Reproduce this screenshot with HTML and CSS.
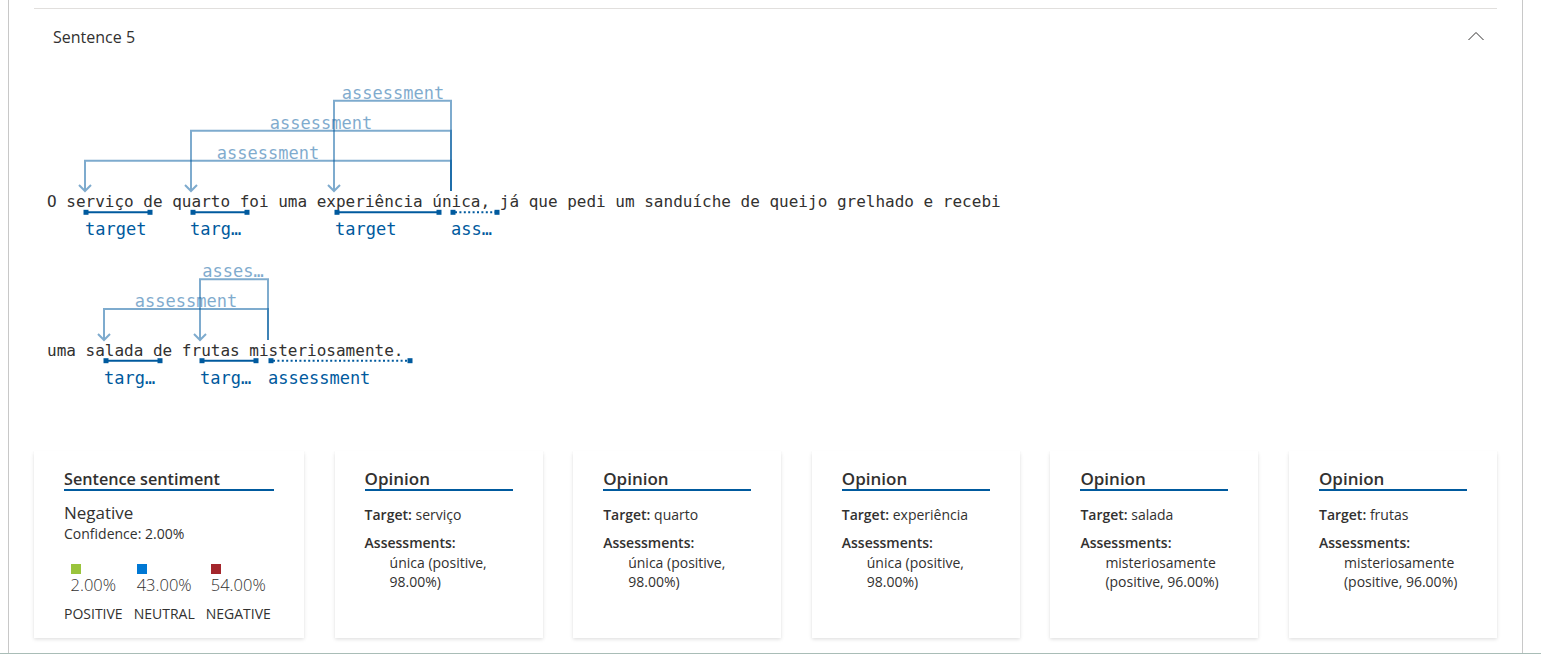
FILE: index.html
```html
<!DOCTYPE html>
<html lang="pt">
<head>
<meta charset="utf-8">
<title>Sentence 5</title>
<link rel="stylesheet" href="styles.css">
</head>
<body>
<div class="frame">
  <div class="panel">
    <section class="sentence">
      <header class="sentence-head">
        <span class="sentence-title">Sentence 5</span>
        <svg class="chevron" width="16" height="10" viewBox="0 0 16 10"><polyline points="0.5,9 8,1.5 15.5,9"/></svg>
      </header>

      <svg class="diagram" width="1463" height="354" viewBox="34 67 1463 354">
        <!-- line 1 relations -->
        <g class="rel">
          <path d="M451 191 V100.7 H334 V191"/>
          <path d="M328 185 L334 191 L340 185"/>
        </g>
        <g class="rel">
          <path d="M451 191 V130.7 H191 V191"/>
          <path d="M185 185 L191 191 L197 185"/>
        </g>
        <g class="rel">
          <path d="M451 191 V160.7 H85 V191"/>
          <path d="M79 185 L85 191 L91 185"/>
        </g>
        <text class="lbl lbl-top" x="393" y="99">assessment</text>
        <text class="lbl lbl-top" x="321" y="129">assessment</text>
        <text class="lbl lbl-top" x="268" y="159">assessment</text>

        <text class="sent" x="47" y="207">O serviço de quarto foi uma experiência única, já que pedi um sanduíche de queijo grelhado e recebi</text>

        <g class="span">
          <path d="M86 212.3 H150"/><rect x="83.5" y="209.8" width="5" height="5"/><rect x="147.5" y="209.8" width="5" height="5"/>
          <path d="M193 212.3 H247"/><rect x="190.5" y="209.8" width="5" height="5"/><rect x="244.5" y="209.8" width="5" height="5"/>
          <path d="M337 212.3 H439"/><rect x="334.5" y="209.8" width="5" height="5"/><rect x="436.5" y="209.8" width="5" height="5"/>
          <path class="dotted" d="M455 212.3 H495"/><rect x="450.5" y="209.8" width="5" height="5"/><rect x="494.5" y="209.8" width="5" height="5"/>
        </g>
        <text class="lbl" x="85" y="235">target</text>
        <text class="lbl" x="190" y="235">targ…</text>
        <text class="lbl" x="335" y="235">target</text>
        <text class="lbl" x="451" y="235">ass…</text>

        <!-- line 2 relations -->
        <g class="rel">
          <path d="M268 340 V279.3 H200 V340"/>
          <path d="M194 334 L200 340 L206 334"/>
        </g>
        <g class="rel">
          <path d="M268 340 V309 H104 V340"/>
          <path d="M98 334 L104 340 L110 334"/>
        </g>
        <text class="lbl lbl-top" x="233" y="277">asses…</text>
        <text class="lbl lbl-top" x="186" y="307">assessment</text>

        <text class="sent" x="47" y="356">uma salada de frutas misteriosamente.</text>

        <g class="span">
          <path d="M106 360.7 H160"/><rect x="103.5" y="358.2" width="5" height="5"/><rect x="157.5" y="358.2" width="5" height="5"/>
          <path d="M202 360.7 H256"/><rect x="199.5" y="358.2" width="5" height="5"/><rect x="253.5" y="358.2" width="5" height="5"/>
          <path class="dotted" d="M273 360.7 H408"/><rect x="268.5" y="358.2" width="5" height="5"/><rect x="407.5" y="358.2" width="5" height="5"/>
        </g>
        <text class="lbl" x="104" y="383.5">targ…</text>
        <text class="lbl" x="200" y="383.5">targ…</text>
        <text class="lbl" x="268" y="383.5">assessment</text>
      </svg>

      <div class="cards">
        <div class="card card-wide">
          <div class="card-title">Sentence sentiment</div>
          <div class="overall">Negative</div>
          <div class="conf">Confidence: 2.00%</div>
          <div class="scores">
            <div class="score">
              <div class="score-top"><span class="sq sq-pos"></span><span class="val">2.00%</span></div>
              <div class="score-name">POSITIVE</div>
            </div>
            <div class="score">
              <div class="score-top"><span class="sq sq-neu"></span><span class="val">43.00%</span></div>
              <div class="score-name">NEUTRAL</div>
            </div>
            <div class="score">
              <div class="score-top"><span class="sq sq-neg"></span><span class="val">54.00%</span></div>
              <div class="score-name">NEGATIVE</div>
            </div>
          </div>
        </div>

        <div class="card">
          <div class="card-title">Opinion</div>
          <div class="row"><span class="key">Target:</span> serviço</div>
          <div class="row row-key"><span class="key">Assessments:</span></div>
          <div class="item">única (positive, 98.00%)</div>
        </div>
        <div class="card">
          <div class="card-title">Opinion</div>
          <div class="row"><span class="key">Target:</span> quarto</div>
          <div class="row row-key"><span class="key">Assessments:</span></div>
          <div class="item">única (positive, 98.00%)</div>
        </div>
        <div class="card">
          <div class="card-title">Opinion</div>
          <div class="row"><span class="key">Target:</span> experiência</div>
          <div class="row row-key"><span class="key">Assessments:</span></div>
          <div class="item">única (positive, 98.00%)</div>
        </div>
        <div class="card">
          <div class="card-title">Opinion</div>
          <div class="row"><span class="key">Target:</span> salada</div>
          <div class="row row-key"><span class="key">Assessments:</span></div>
          <div class="item">misteriosamente (positive, 96.00%)</div>
        </div>
        <div class="card">
          <div class="card-title">Opinion</div>
          <div class="row"><span class="key">Target:</span> frutas</div>
          <div class="row row-key"><span class="key">Assessments:</span></div>
          <div class="item">misteriosamente (positive, 96.00%)</div>
        </div>
      </div>
    </section>
  </div>
</div>
</body>
</html>
```

FILE: styles.css
```css
* { box-sizing: border-box; }

html, body {
  margin: 0;
  padding: 0;
  background: #ffffff;
  overflow: hidden;
}

body {
  font-family: "Open Sans", "Noto Sans", sans-serif;
  color: #323130;
}

.frame {
  height: 654px;
  border-bottom: 1px solid #a9bdb7;
}

.panel {
  margin-left: 8px;
  width: 1515px;
  height: 100%;
  border-left: 1px solid #c8c8c8;
  border-right: 1px solid #c8c8c8;
  padding: 8px 0 0 25px;
}

.sentence {
  width: 1463px;
  border-top: 1px solid #e1dfdd;
}

.sentence-head {
  height: 58px;
  display: flex;
  align-items: center;
  justify-content: space-between;
  padding: 0 13px 2px 19px;
}

.sentence-title {
  font-size: 16px;
  line-height: 20px;
  color: #323130;
}

.chevron {
  display: block;
  margin-top: -2px;
}

.chevron polyline {
  fill: none;
  stroke: #323130;
  stroke-width: 1;
}

.diagram {
  display: block;
}

.rel {
  opacity: 0.5;
}

.rel path {
  fill: none;
  stroke: #005a9e;
  stroke-width: 2;
}

.sent {
  font-family: "DejaVu Sans Mono", "Liberation Mono", monospace;
  font-size: 16px;
  fill: #323130;
}

.lbl {
  font-family: "DejaVu Sans Mono", "Liberation Mono", monospace;
  font-size: 17px;
  fill: #005a9e;
}

.lbl-top {
  text-anchor: middle;
  opacity: 0.5;
}

.span path {
  fill: none;
  stroke: #005a9e;
  stroke-width: 2;
}

.span path.dotted {
  stroke-dasharray: 2 2.4;
}

.span rect {
  fill: #005a9e;
}

.cards {
  display: flex;
  justify-content: space-between;
  margin-top: 30px;
}

.card {
  width: 208px;
  height: 187px;
  background: #ffffff;
  box-shadow: 0 1.6px 3.6px rgba(0, 0, 0, 0.13), 0 0.3px 0.9px rgba(0, 0, 0, 0.11);
  padding: 18px 30px 0 30px;
}

.card-wide {
  width: 270px;
}

.card-title {
  font-size: 17px;
  line-height: 20px;
  font-weight: 600;
  color: #323130;
  padding-bottom: 0;
  border-bottom: 2px solid #005a9e;
  margin-bottom: 14px;
}

.card-wide .card-title {
  font-size: 16.2px;
}

.row {
  font-size: 14px;
  line-height: 20px;
}

.row-key {
  margin-top: 8px;
}

.key {
  font-weight: 600;
}

.item {
  font-size: 14px;
  line-height: 19px;
  padding-left: 25px;
}

.overall {
  font-size: 17px;
  line-height: 20px;
  margin-top: -2px;
}

.conf {
  font-size: 14px;
  line-height: 18px;
  margin-top: 1.5px;
}

.scores {
  display: flex;
  gap: 11px;
  margin-top: 21px;
}

.score {
  display: flex;
  flex-direction: column;
  align-items: center;
}

.score-top {
  display: flex;
  flex-direction: column;
  align-items: flex-start;
}

.sq {
  display: block;
  width: 10px;
  height: 10px;
}

.sq-pos { background: #9ac43c; }
.sq-neu { background: #0078d4; }
.sq-neg { background: #a4262c; }

.val {
  font-size: 16.5px;
  line-height: 20px;
  font-weight: 300;
  margin-top: 1px;
}

.score-name {
  font-size: 14px;
  line-height: 18px;
  margin-top: 10px;
}
```
